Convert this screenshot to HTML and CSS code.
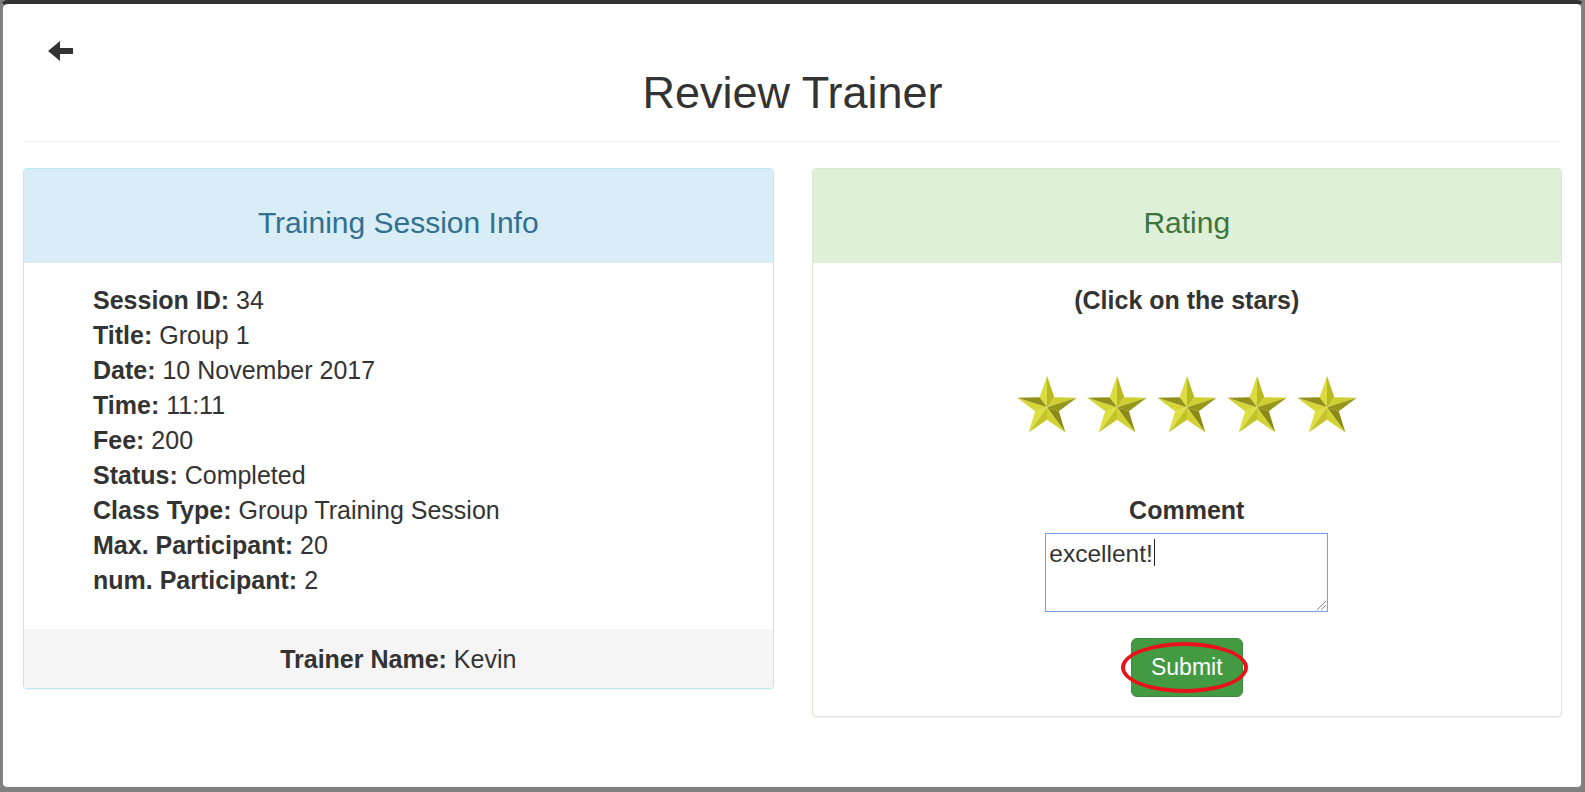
FILE: index.html
```html
<!DOCTYPE html>
<html lang="en">
<head>
<meta charset="utf-8">
<title>Review Trainer</title>
<link rel="stylesheet" href="styles.css">
</head>
<body>
<div class="window">
  <div class="page">
    <a class="back" href="#" aria-label="Back">
      <svg width="25" height="20" viewBox="0 0 25 20"><path d="M0 10 L12 0 L12 7 L25 7 L25 13 L12 13 L12 20 Z" fill="#333"/></svg>
    </a>
    <h1 class="title">Review Trainer</h1>
    <hr class="divider">
    <div class="panels">
      <section class="panel panel-info">
        <div class="panel-heading"><h3 class="panel-title">Training Session Info</h3></div>
        <div class="panel-body info-body">
          <div class="line"><b>Session ID:</b> 34</div>
          <div class="line"><b>Title:</b> Group 1</div>
          <div class="line"><b>Date:</b> 10 November 2017</div>
          <div class="line"><b>Time:</b> 11:11</div>
          <div class="line"><b>Fee:</b> 200</div>
          <div class="line"><b>Status:</b> Completed</div>
          <div class="line"><b>Class Type:</b> Group Training Session</div>
          <div class="line"><b>Max. Participant:</b> 20</div>
          <div class="line"><b>num. Participant:</b> 2</div>
        </div>
        <div class="panel-footer"><b>Trainer Name:</b> Kevin</div>
      </section>
      <section class="panel panel-success">
        <div class="panel-heading"><h3 class="panel-title">Rating</h3></div>
        <div class="panel-body rating-body">
          <div class="line"><b>(Click on the stars)</b></div>
          <div class="stars">
            <svg class="star" viewBox="2 2 96 91"><g><polygon points="50,52 50,2 38.24,35.82" fill="#dcdc3e"/><polygon points="50,52 50,2 61.76,35.82" fill="#b8b822"/><polygon points="50,52 61.76,35.82 97.55,36.55" fill="#cfcf30"/><polygon points="50,52 97.55,36.55 69.02,58.18" fill="#96961a"/><polygon points="50,52 69.02,58.18 79.39,92.45" fill="#8a8a14"/><polygon points="50,52 79.39,92.45 50,72" fill="#d2d232"/><polygon points="50,52 50,72 20.61,92.45" fill="#c4c42a"/><polygon points="50,52 20.61,92.45 30.98,58.18" fill="#dede40"/><polygon points="50,52 30.98,58.18 2.45,36.55" fill="#d6d638"/><polygon points="50,52 2.45,36.55 38.24,35.82" fill="#90901a"/></g></svg>
            <svg class="star" viewBox="2 2 96 91"><g><polygon points="50,52 50,2 38.24,35.82" fill="#dcdc3e"/><polygon points="50,52 50,2 61.76,35.82" fill="#b8b822"/><polygon points="50,52 61.76,35.82 97.55,36.55" fill="#cfcf30"/><polygon points="50,52 97.55,36.55 69.02,58.18" fill="#96961a"/><polygon points="50,52 69.02,58.18 79.39,92.45" fill="#8a8a14"/><polygon points="50,52 79.39,92.45 50,72" fill="#d2d232"/><polygon points="50,52 50,72 20.61,92.45" fill="#c4c42a"/><polygon points="50,52 20.61,92.45 30.98,58.18" fill="#dede40"/><polygon points="50,52 30.98,58.18 2.45,36.55" fill="#d6d638"/><polygon points="50,52 2.45,36.55 38.24,35.82" fill="#90901a"/></g></svg>
            <svg class="star" viewBox="2 2 96 91"><g><polygon points="50,52 50,2 38.24,35.82" fill="#dcdc3e"/><polygon points="50,52 50,2 61.76,35.82" fill="#b8b822"/><polygon points="50,52 61.76,35.82 97.55,36.55" fill="#cfcf30"/><polygon points="50,52 97.55,36.55 69.02,58.18" fill="#96961a"/><polygon points="50,52 69.02,58.18 79.39,92.45" fill="#8a8a14"/><polygon points="50,52 79.39,92.45 50,72" fill="#d2d232"/><polygon points="50,52 50,72 20.61,92.45" fill="#c4c42a"/><polygon points="50,52 20.61,92.45 30.98,58.18" fill="#dede40"/><polygon points="50,52 30.98,58.18 2.45,36.55" fill="#d6d638"/><polygon points="50,52 2.45,36.55 38.24,35.82" fill="#90901a"/></g></svg>
            <svg class="star" viewBox="2 2 96 91"><g><polygon points="50,52 50,2 38.24,35.82" fill="#dcdc3e"/><polygon points="50,52 50,2 61.76,35.82" fill="#b8b822"/><polygon points="50,52 61.76,35.82 97.55,36.55" fill="#cfcf30"/><polygon points="50,52 97.55,36.55 69.02,58.18" fill="#96961a"/><polygon points="50,52 69.02,58.18 79.39,92.45" fill="#8a8a14"/><polygon points="50,52 79.39,92.45 50,72" fill="#d2d232"/><polygon points="50,52 50,72 20.61,92.45" fill="#c4c42a"/><polygon points="50,52 20.61,92.45 30.98,58.18" fill="#dede40"/><polygon points="50,52 30.98,58.18 2.45,36.55" fill="#d6d638"/><polygon points="50,52 2.45,36.55 38.24,35.82" fill="#90901a"/></g></svg>
            <svg class="star" viewBox="2 2 96 91"><g><polygon points="50,52 50,2 38.24,35.82" fill="#dcdc3e"/><polygon points="50,52 50,2 61.76,35.82" fill="#b8b822"/><polygon points="50,52 61.76,35.82 97.55,36.55" fill="#cfcf30"/><polygon points="50,52 97.55,36.55 69.02,58.18" fill="#96961a"/><polygon points="50,52 69.02,58.18 79.39,92.45" fill="#8a8a14"/><polygon points="50,52 79.39,92.45 50,72" fill="#d2d232"/><polygon points="50,52 50,72 20.61,92.45" fill="#c4c42a"/><polygon points="50,52 20.61,92.45 30.98,58.18" fill="#dede40"/><polygon points="50,52 30.98,58.18 2.45,36.55" fill="#d6d638"/><polygon points="50,52 2.45,36.55 38.24,35.82" fill="#90901a"/></g></svg>
          </div>
          <div class="line comment-label"><b>Comment</b></div>
          <div class="comment-box"><span>excellent!</span><span class="caret"></span><span class="grip"></span></div>
          <div class="btn-wrap">
            <button class="btn-submit" type="button">Submit</button>
            <span class="highlight"></span>
          </div>
        </div>
      </section>
    </div>
  </div>
</div>
</body>
</html>
```
FILE: styles.css
```css
html, body {
  margin: 0;
  padding: 0;
  background: #808080;
}
body {
  font-family: "Liberation Sans", Arial, sans-serif;
  color: #333;
}
.window {
  width: 1585px;
  height: 792px;
  box-sizing: border-box;
  background: #fff;
  border-left: 3px solid #808080;
  border-right: 4px solid #808080;
  border-bottom: 5px solid #808080;
  border-top: 4px solid #333;
  border-radius: 8px;
  overflow: hidden;
}
.page {
  padding: 37px 19px 0 20px;
}
.back {
  display: block;
  width: 25px;
  height: 20px;
  margin-left: 25px;
}
.back svg {
  display: block;
}
.title {
  margin: 7px 0 0;
  font-size: 45px;
  line-height: 49px;
  font-weight: normal;
  text-align: center;
  color: #333;
}
.divider {
  margin: 24px 2px 0 0;
  border: 0;
  border-top: 1px solid #eee;
  height: 0;
}
.panels {
  display: flex;
  align-items: flex-start;
  gap: 38px;
  margin-top: 26px;
}
.panel {
  flex: 1;
  border: 1px solid;
  border-radius: 4px;
  overflow: hidden;
  background: #fff;
  box-shadow: 0 1px 1px rgba(0,0,0,0.05);
}
.panel-info { border-color: #bce8f1; }
.panel-success { border-color: #dce5d5; }
.panel-heading {
  padding: 37px 15px 24px;
}
.panel-info .panel-heading { background: #d9edf7; color: #31708f; }
.panel-success .panel-heading { background: #dff0d8; color: #3c763d; }
.panel-title {
  margin: 0;
  font-size: 30px;
  line-height: 33px;
  font-weight: normal;
  text-align: center;
}
.panel-body {
  font-size: 25px;
  line-height: 35px;
}
.info-body {
  padding: 20px 15px 31px 69px;
}
.panel-footer {
  background: #f5f5f5;
  font-size: 25px;
  line-height: 35px;
  padding: 13px 15px 11px;
  text-align: center;
}
.rating-body {
  padding: 20px 15px 19px;
  text-align: center;
}
.stars {
  display: flex;
  justify-content: center;
  gap: 10px;
  margin-top: 57px;
}
.star {
  width: 60px;
  height: 59px;
  display: block;
}
.comment-label {
  margin-top: 59px;
}
.comment-box {
  position: relative;
  width: 283px;
  height: 79px;
  box-sizing: border-box;
  margin: 5px auto 0;
  border: 1px solid #6fa3e8;
  padding: 2px 3px;
  text-align: left;
  font-size: 24.5px;
  line-height: 35px;
  color: #333;
}
.caret {
  display: inline-block;
  width: 1px;
  height: 27px;
  background: #222;
  vertical-align: -4px;
  margin-left: 1px;
}
.grip {
  position: absolute;
  right: 1px;
  bottom: 1px;
  width: 9px;
  height: 9px;
  background: linear-gradient(135deg, transparent 45%, #888 45%, #888 52%, transparent 52%, transparent 70%, #888 70%, #888 77%, transparent 77%);
}
.btn-wrap {
  position: relative;
  width: 112px;
  margin: 26px auto 0;
}
.btn-submit {
  display: block;
  width: 112px;
  height: 59px;
  box-sizing: border-box;
  padding: 0;
  border: 1px solid #3d8b3d;
  border-radius: 6px;
  background: #439a43;
  color: #fff;
  font-family: "Liberation Sans", Arial, sans-serif;
  font-size: 23px;
  line-height: 35px;
}
.highlight {
  position: absolute;
  left: -10px;
  top: 4px;
  width: 127px;
  height: 51px;
  box-sizing: border-box;
  border: 4px solid #e8121a;
  border-radius: 50%;
  pointer-events: none;
}
```
